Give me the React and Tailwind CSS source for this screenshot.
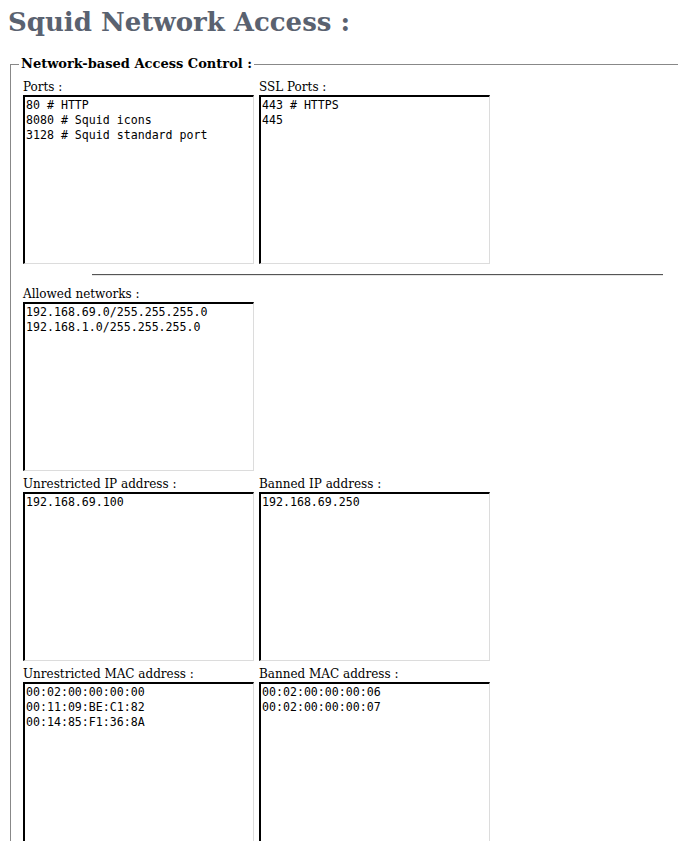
import React from "react";

const rows = [
  [
    { label: "Ports :", value: "80 # HTTP\n8080 # Squid icons\n3128 # Squid standard port" },
    { label: "SSL Ports :", value: "443 # HTTPS\n445" },
  ],
  "hr",
  [{ label: "Allowed networks :", value: "192.168.69.0/255.255.255.0\n192.168.1.0/255.255.255.0" }],
  [
    { label: "Unrestricted IP address :", value: "192.168.69.100" },
    { label: "Banned IP address :", value: "192.168.69.250" },
  ],
  [
    { label: "Unrestricted MAC address :", value: "00:02:00:00:00:00\n00:11:09:BE:C1:82\n00:14:85:F1:36:8A" },
    { label: "Banned MAC address :", value: "00:02:00:00:00:06\n00:02:00:00:00:07" },
  ],
];

function Field({ label, value }) {
  return (
    <div className="flex flex-col w-[231px]">
      <label className="h-4 text-[12px] leading-4 text-black">{label}</label>
      <textarea
        readOnly
        defaultValue={value}
        className="h-[169px] w-[231px] resize-none overflow-hidden bg-white p-[1px] text-[11.6px] leading-[15px] text-black border-t-2 border-l-2 border-r border-b border-t-black border-l-black border-r-[#dcdcdc] border-b-[#dcdcdc] outline-none"
        style={{ fontFamily: '"DejaVu Sans Mono", monospace' }}
      />
    </div>
  );
}

export default function App() {
  return (
    <div
      className="w-[678px] h-[841px] overflow-hidden bg-white"
      style={{ fontFamily: '"DejaVu Serif", serif' }}
    >
      <h1 className="pl-2 pt-[6px] text-[26px] leading-[32px] font-bold text-[#5a6270]">
        Squid Network Access :
      </h1>
      <fieldset className="ml-[10px] mt-[18px] w-[720px] border border-[#888] pl-3 pt-[7px]">
        <legend className="ml-[-4px] px-[2px] text-[13px] font-bold leading-4 text-black">
          Network-based Access Control :
        </legend>
        <div className="flex flex-col gap-[5px]">
          {rows.map((row, i) =>
            row === "hr" ? (
              <div key={i} className="py-[5px]">
                <div className="ml-[69px] w-[571px] h-[2px] border-t border-t-[#555] border-b border-b-[#e5e5e5]" />
              </div>
            ) : (
              <div key={i} className="flex gap-[5px]">
                {row.map((f) => (
                  <Field key={f.label} {...f} />
                ))}
              </div>
            )
          )}
        </div>
      </fieldset>
    </div>
  );
}
